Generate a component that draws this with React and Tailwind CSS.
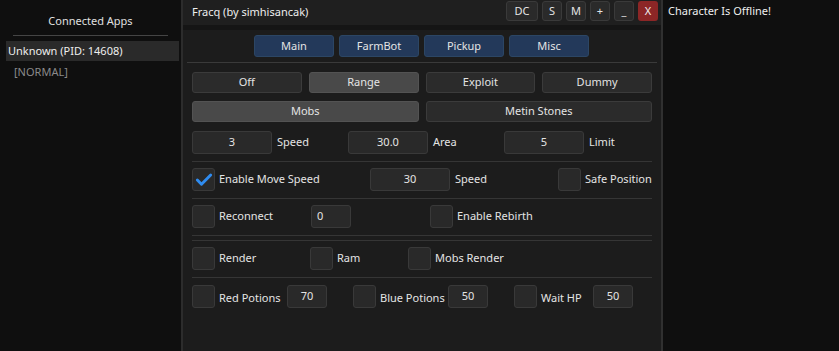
import { Check } from "lucide-react";

const font = { fontFamily: '"Noto Sans", "Open Sans", sans-serif' };

function Btn({ children, active, className = "" }) {
  return (
    <div
      className={`h-[21px] flex items-center justify-center rounded-[3px] border text-[11px] text-[#e4e4e4] ${
        active ? "bg-[#494949] border-[#535353]" : "bg-[#2b2b2b] border-[#3b3b3b]"
      } ${className}`}
    >
      {children}
    </div>
  );
}

function Input({ value, w = "w-[80px]", left }) {
  return (
    <div
      className={`${w} h-[23px] shrink-0 flex items-center rounded-[3px] border border-[#393939] bg-[#292929] text-[11px] text-[#e4e4e4] ${
        left ? "justify-start pl-[5px]" : "justify-center"
      }`}
    >
      {value}
    </div>
  );
}

function Box({ checked }) {
  return (
    <div className="w-[23px] h-[23px] shrink-0 rounded-[3px] border border-[#393939] bg-[#292929] flex items-center justify-center">
      {checked && <Check size={20} strokeWidth={3.5} className="text-[#2f8cf0]" />}
    </div>
  );
}

function Label({ children }) {
  return <span className="text-[11px] text-[#e4e4e4] whitespace-nowrap">{children}</span>;
}

function Sep() {
  return <div className="h-px bg-[#353535] mt-[7px] mb-[6px]" />;
}

export default function App() {
  return (
    <div className="w-[839px] h-[351px] flex bg-[#0f0f0f] overflow-hidden" style={font}>
      {/* Connected apps */}
      <div className="w-[181px] shrink-0 flex flex-col">
        <div className="h-[35px] flex items-end justify-center pb-[6px] text-[11px] text-[#e0e0e0]">Connected Apps</div>
        <div className="mx-[13px] h-px bg-[#454545]" />
        <div className="mt-[5px] ml-[6px] mr-[2px] h-[20px] bg-[#2a2a2a] flex items-center pl-[2px] text-[11px] text-[#eeeeee]">
          Unknown (PID: 14608)
        </div>
        <div className="mt-[1px] pl-[14px] h-[20px] flex items-center text-[11px] text-[#8a8a8a]">[NORMAL]</div>
      </div>

      <div className="w-[2px] shrink-0 bg-[#2c2c2c]" />

      {/* Main window */}
      <div className="w-[478px] shrink-0 flex flex-col bg-[#1c1c1c]">
        <div className="h-[25px] bg-[#1f1f1f] flex items-center pl-[9px] pr-[3px]">
          <span className="text-[11px] text-[#eeeeee]">Fracq (by simhisancak)</span>
          <div className="ml-auto flex gap-[4px] -mt-[3px]">
            {["DC", "S", "M", "+", "_"].map((t) => (
              <div
                key={t}
                className={`${t === "DC" ? "w-[32px]" : "w-[20px]"} h-[20px] flex items-center justify-center rounded-[3px] border border-[#3a3a3a] bg-[#2a2a2a] text-[11px] text-[#e4e4e4]`}
              >
                {t}
              </div>
            ))}
            <div className="w-[20px] h-[20px] flex items-center justify-center rounded-[3px] bg-[#8c2626] text-[11px] text-[#f0f0f0]">X</div>
          </div>
        </div>
        <div className="h-[5px] bg-[#151515]" />

        <div className="px-[4px] pt-[5px]">
          <div className="flex justify-center gap-[5px] pr-[1px]">
            {["Main", "FarmBot", "Pickup", "Misc"].map((t) => (
              <div
                key={t}
                className="w-[80px] h-[22px] flex items-center justify-center rounded-[3px] border border-[#2c4664] bg-[#23395a] text-[11px] text-[#e4e4e4]"
              >
                {t}
              </div>
            ))}
          </div>
          <div className="h-px bg-[#3a3a3a] mt-[5px]" />
        </div>

        <div className="px-[9px] pt-[9px] flex flex-col">
          <div className="grid grid-cols-4 gap-[7px]">
            <Btn>Off</Btn>
            <Btn active>Range</Btn>
            <Btn>Exploit</Btn>
            <Btn>Dummy</Btn>
          </div>
          <div className="grid grid-cols-2 gap-[7px] mt-[8px]">
            <Btn active>Mobs</Btn>
            <Btn>Metin Stones</Btn>
          </div>

          <div className="flex items-center mt-[9px]">
            <div className="w-[156px] flex items-center gap-[5px]">
              <Input value="3" />
              <Label>Speed</Label>
            </div>
            <div className="w-[156px] flex items-center gap-[5px]">
              <Input value="30.0" />
              <Label>Area</Label>
            </div>
            <div className="flex items-center gap-[5px]">
              <Input value="5" />
              <Label>Limit</Label>
            </div>
          </div>

          <Sep />

          <div className="flex items-center">
            <div className="w-[178px] shrink-0 flex items-center gap-[4px]">
              <Box checked />
              <Label>Enable Move Speed</Label>
            </div>
            <div className="w-[188px] shrink-0 flex items-center gap-[5px]">
              <Input value="30" />
              <Label>Speed</Label>
            </div>
            <div className="flex items-center gap-[4px]">
              <Box />
              <Label>Safe Position</Label>
            </div>
          </div>

          <Sep />

          <div className="flex items-center">
            <div className="w-[119px] shrink-0 flex items-center gap-[4px]">
              <Box />
              <Label>Reconnect</Label>
            </div>
            <div className="w-[119px] shrink-0">
              <Input value="0" w="w-[40px]" left />
            </div>
            <div className="flex items-center gap-[4px]">
              <Box />
              <Label>Enable Rebirth</Label>
            </div>
          </div>

          <div className="h-px bg-[#353535] mt-[7px]" />
          <div className="h-px bg-[#353535] mt-[4px] mb-[6px]" />

          <div className="flex items-center">
            <div className="w-[118px] shrink-0 flex items-center gap-[4px]">
              <Box />
              <Label>Render</Label>
            </div>
            <div className="w-[98px] shrink-0 flex items-center gap-[4px]">
              <Box />
              <Label>Ram</Label>
            </div>
            <div className="flex items-center gap-[4px]">
              <Box />
              <Label>Mobs Render</Label>
            </div>
          </div>

          <Sep />

          <div className="flex items-center">
            <div className="w-[161px] shrink-0 flex items-center">
              <Box />
              <span className="ml-[4px] w-[68px]"><Label>Red Potions</Label></span>
              <Input value="70" w="w-[40px]" />
            </div>
            <div className="w-[161px] shrink-0 flex items-center">
              <Box />
              <span className="ml-[4px] w-[68px]"><Label>Blue Potions</Label></span>
              <Input value="50" w="w-[40px]" />
            </div>
            <div className="flex items-center">
              <Box />
              <span className="ml-[4px] w-[52px]"><Label>Wait HP</Label></span>
              <Input value="50" w="w-[40px]" />
            </div>
          </div>
        </div>
      </div>

      <div className="w-[2px] shrink-0 bg-[#303030]" />

      <div className="flex-1 pl-[5px] pt-[3px] text-[11px] text-[#eeeeee]">Character Is Offline!</div>
    </div>
  );
}
